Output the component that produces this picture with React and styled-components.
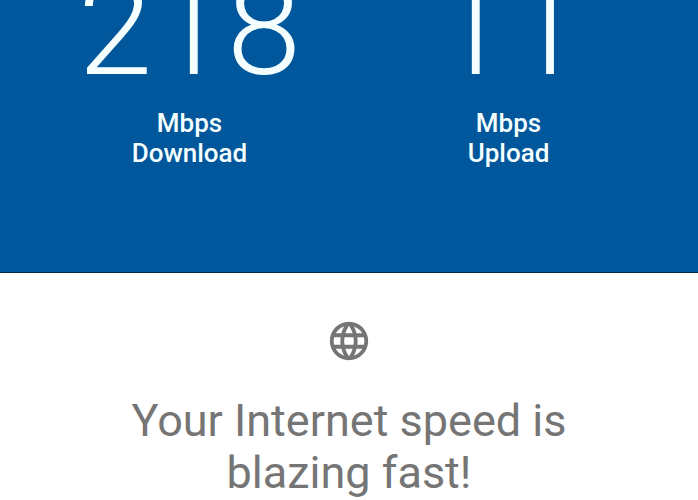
import React from 'react';
import styled, { createGlobalStyle } from 'styled-components';

const GlobalStyle = createGlobalStyle`
  * {
    box-sizing: border-box;
  }

  html, body {
    margin: 0;
    height: 100%;
    overflow: hidden;
  }

  body {
    background-color: #fff;
    font-family: Roboto, "Liberation Sans", sans-serif;
  }

  h1, p {
    margin: 0;
  }
`;

const Results = styled.section`
  display: grid;
  grid-template-columns: 1fr 1fr;
  padding: 0 30px 104px;
  background-color: #01579b;
  border-bottom: 1px solid #06294a;
  color: #f5ffff;
`;

const Result = styled.div`
  display: flex;
  flex-direction: column;
  align-items: center;
  text-align: center;
`;

const Speed = styled.p`
  margin-top: -30px;
  font-size: 134px;
  font-weight: 300;
  line-height: 118px;
`;

const Label = styled.p`
  margin-top: 20px;
  font-size: 26px;
  font-weight: 500;
  line-height: 30px;
`;

const Summary = styled.section`
  display: flex;
  flex-direction: column;
  align-items: center;
  padding: 45px 100px 0;
  color: #757575;

  svg {
    width: 46px;
    height: 46px;
    fill: currentColor;
  }

  h1 {
    max-width: 480px;
    margin-top: 31px;
    font-size: 45px;
    font-weight: 400;
    line-height: 52px;
    text-align: center;
  }
`;

const GlobeIcon = () => (
  <svg viewBox="0 0 24 24" aria-hidden="true">
    <path d="M11.99 2C6.47 2 2 6.48 2 12s4.47 10 9.99 10C17.52 22 22 17.52 22 12S17.52 2 11.99 2zm6.93 6h-2.95a15.65 15.65 0 0 0-1.38-3.56A8.03 8.03 0 0 1 18.92 8zM12 4.04c.83 1.2 1.48 2.53 1.91 3.96h-3.82c.43-1.43 1.08-2.76 1.91-3.96zM4.26 14C4.1 13.36 4 12.69 4 12s.1-1.36.26-2h3.38c-.08.66-.14 1.32-.14 2s.06 1.34.14 2H4.26zm.82 2h2.95c.32 1.25.78 2.45 1.38 3.56A7.987 7.987 0 0 1 5.08 16zm2.95-8H5.08a7.987 7.987 0 0 1 4.33-3.56A15.65 15.65 0 0 0 8.03 8zM12 19.96c-.83-1.2-1.48-2.53-1.91-3.96h3.82c-.43 1.43-1.08 2.76-1.91 3.96zM14.34 14H9.66c-.09-.66-.16-1.32-.16-2s.07-1.35.16-2h4.68c.09.65.16 1.32.16 2s-.07 1.34-.16 2zm.25 5.56c.6-1.11 1.06-2.31 1.38-3.56h2.95a8.03 8.03 0 0 1-4.33 3.56zM16.36 14c.08-.66.14-1.32.14-2s-.06-1.34-.14-2h3.38c.16.64.26 1.31.26 2s-.1 1.36-.26 2h-3.38z" />
  </svg>
);

const results = [
  { label: 'Download', speed: 218 },
  { label: 'Upload', speed: 11 },
];

const App = () => {
  return (
    <>
      <GlobalStyle />
      <main>
        <Results>
          {results.map(({ label, speed }) => (
            <Result key={label}>
              <Speed>{speed}</Speed>
              <Label>Mbps<br />{label}</Label>
            </Result>
          ))}
        </Results>

        <Summary>
          <GlobeIcon />
          <h1>Your Internet speed is blazing fast!</h1>
        </Summary>
      </main>
    </>
  );
};

export default App;
